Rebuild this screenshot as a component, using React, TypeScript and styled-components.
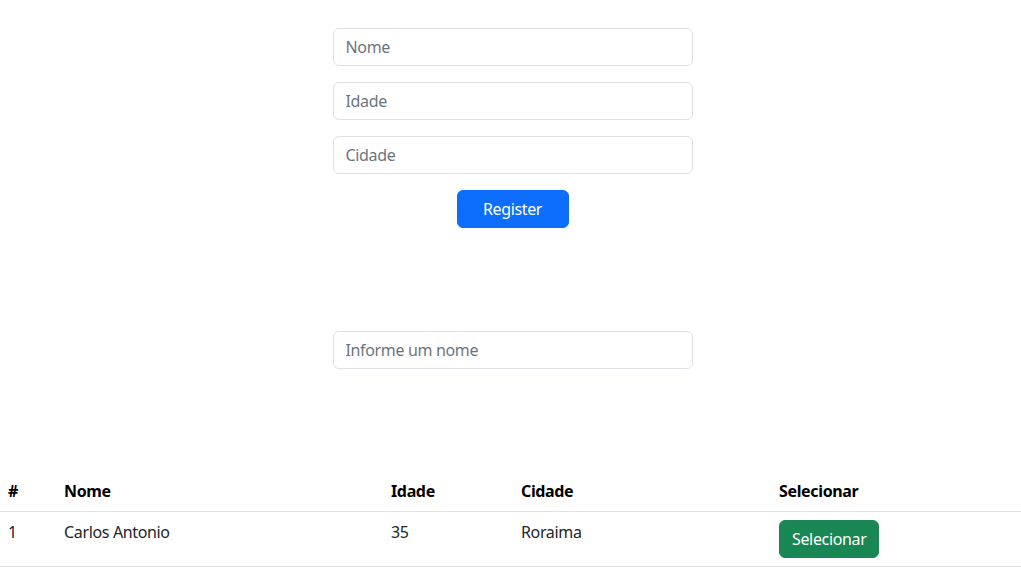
import React from "react";
import styled, { createGlobalStyle } from "styled-components";

const Global = createGlobalStyle`
  * { box-sizing: border-box; }
  body {
    margin: 0;
    font-family: "Segoe UI", "Noto Sans", "Liberation Sans", sans-serif;
    font-size: 16px;
    line-height: 1.5;
    letter-spacing: -0.35px;
    color: #212529;
    background: #fff;
  }
  input, button { letter-spacing: inherit; }
`;

const Page = styled.div`
  display: flex;
  flex-direction: column;
  padding-top: 28px;
`;

const Centered = styled.div`
  padding-left: 4px;
  display: flex;
  flex-direction: column;
`;

const Form = styled.form`
  width: 360px;
  margin: 0 auto;
  display: flex;
  flex-direction: column;
  gap: 16px;
`;

const Input = styled.input`
  display: block;
  width: 100%;
  height: 38px;
  padding: 6px 12px;
  font: inherit;
  color: #212529;
  border: 1px solid #dee2e6;
  border-radius: 6px;
  outline: none;
  &::placeholder { color: #6c757d; }
`;

const Button = styled.button<{ $variant: "primary" | "success" }>`
  height: 38px;
  padding: 6px 12px;
  font: inherit;
  color: #fff;
  border: 1px solid ${(p) => (p.$variant === "primary" ? "#0d6efd" : "#198754")};
  background: ${(p) => (p.$variant === "primary" ? "#0d6efd" : "#198754")};
  border-radius: 6px;
  cursor: pointer;
`;

const RegisterButton = styled(Button)`
  align-self: center;
  width: 112px;
`;

const Search = styled.div`
  width: 360px;
  margin: 103px auto 0;
`;

const Table = styled.table`
  margin-top: 102px;
  width: 100%;
  border-collapse: collapse;
  table-layout: fixed;
`;

const Th = styled.th`
  text-align: left;
  font-weight: 700;
  padding: 8px;
  color: #000;
  border-bottom: 1px solid #dee2e6;
  vertical-align: bottom;
`;

const Td = styled.td`
  padding: 8px;
  vertical-align: top;
  border-bottom: 1px solid #dee2e6;
`;

export default function App() {
  return (
    <>
      <Global />
      <Page>
        <Centered>
          <Form onSubmit={(e) => e.preventDefault()}>
            <Input placeholder="Nome" />
            <Input placeholder="Idade" />
            <Input placeholder="Cidade" />
            <RegisterButton $variant="primary" type="submit">Register</RegisterButton>
          </Form>
          <Search>
            <Input placeholder="Informe um nome" />
          </Search>
        </Centered>
        <Table>
          <colgroup>
            <col style={{ width: 56 }} />
            <col style={{ width: 327 }} />
            <col style={{ width: 130 }} />
            <col style={{ width: 258 }} />
            <col />
          </colgroup>
          <thead>
            <tr>
              <Th>#</Th>
              <Th>Nome</Th>
              <Th>Idade</Th>
              <Th>Cidade</Th>
              <Th>Selecionar</Th>
            </tr>
          </thead>
          <tbody>
            <tr>
              <Td>1</Td>
              <Td>Carlos Antonio</Td>
              <Td>35</Td>
              <Td>Roraima</Td>
              <Td>
                <Button $variant="success">Selecionar</Button>
              </Td>
            </tr>
          </tbody>
        </Table>
      </Page>
    </>
  );
}
